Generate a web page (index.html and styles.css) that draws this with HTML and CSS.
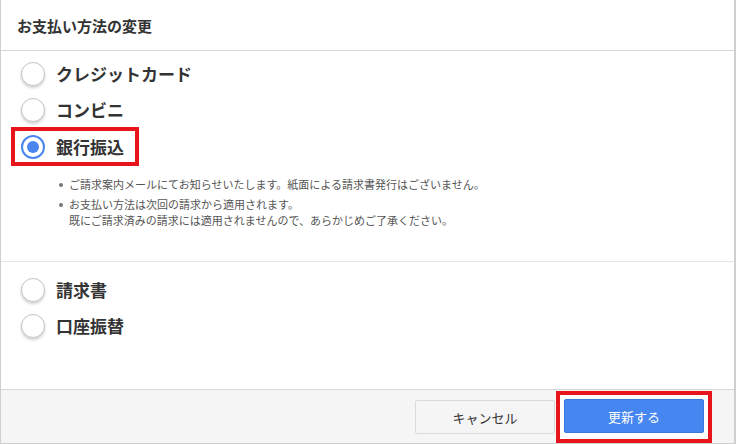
FILE: index.html
```html
<!DOCTYPE html>
<html lang="ja">
<head>
<meta charset="utf-8">
<link rel="stylesheet" href="styles.css">
</head>
<body>
<div class="dialog">
  <div class="header">お支払い方法の変更</div>
  <div class="content">
    <div class="group">
      <label class="option"><span class="radio"></span><span class="label">クレジットカード</span></label>
      <label class="option"><span class="radio"></span><span class="label">コンビニ</span></label>
      <label class="option selected"><span class="radio"><span class="dot"></span></span><span class="label">銀行振込</span></label>
      <ul class="notes">
        <li>ご請求案内メールにてお知らせいたします。紙面による請求書発行はございません。</li>
        <li>お支払い方法は次回の請求から適用されます。<br>既にご請求済みの請求には適用されませんので、あらかじめご了承ください。</li>
      </ul>
    </div>
    <div class="group second">
      <label class="option"><span class="radio"></span><span class="label">請求書</span></label>
      <label class="option"><span class="radio"></span><span class="label">口座振替</span></label>
    </div>
  </div>
  <div class="footer">
    <button class="btn cancel">キャンセル</button>
    <span class="highlight-btn"><button class="btn primary">更新する</button></span>
  </div>
</div>
</body>
</html>
```

FILE: styles.css
```css
* { box-sizing: border-box; }
html, body { margin: 0; padding: 0; background: #fff; }
body {
  font-family: "Noto Sans CJK JP", "Noto Sans", sans-serif;
  color: #333;
}
.dialog {
  width: 736px;
  height: 444px;
  border-left: 1px solid #cfcfcf;
  border-right: 2px solid #cfcfcf;
  border-bottom: 1px solid #cfcfcf;
  display: flex;
  flex-direction: column;
}
.header {
  height: 51px;
  padding: 16px 0 0 16px;
  font-size: 15px;
  font-weight: bold;
  line-height: 20px;
  color: #333;
  border-bottom: 1px solid #d6d6d6;
}
.content {
  flex: 1;
  display: flex;
  flex-direction: column;
}
.group {
  padding: 5px 0 0 10px;
  border-bottom: 1px solid #e6e6e6;
  height: 211px;
}
.group.second {
  border-bottom: none;
  height: auto;
  padding-top: 10px;
}
.option {
  display: flex;
  align-items: center;
  height: 37px;
  width: 128px;
  padding-left: 6px;
  gap: 11px;
  font-size: 17px;
  font-weight: bold;
  color: #333;
  border: 4px solid transparent;
  margin: -1px 0;
}
.option.selected {
  border-color: #e8141c;
  height: 39px;
  padding-left: 6px;
}
.radio {
  width: 24px;
  height: 24px;
  border-radius: 50%;
  border: 1px solid #c4c4c4;
  background: #fff;
  box-shadow: 0 2px 3px rgba(0,0,0,0.18);
  display: flex;
  align-items: center;
  justify-content: center;
  flex: none;
}
.selected .radio {
  border: 2px solid #4a86f0;
  box-shadow: none;
}
.dot {
  width: 12px;
  height: 12px;
  border-radius: 50%;
  background: #4a86f0;
}
.label {
  white-space: nowrap;
  line-height: 24px;
}
.notes {
  margin: 11px 0 0 0;
  padding: 0 0 0 58px;
  list-style: none;
  font-size: 11px;
  line-height: 16px;
  color: #555;
}
.notes li {
  position: relative;
  margin-bottom: 4px;
}
.notes li::before {
  content: "";
  position: absolute;
  left: -10px;
  top: 7px;
  width: 4px;
  height: 4px;
  border-radius: 50%;
  background: #777;
}
.footer {
  height: 54px;
  background: #f5f5f5;
  border-top: 1px solid #d6d6d6;
  display: flex;
  justify-content: flex-end;
  align-items: flex-start;
  padding: 1px 22px 0 0;
  gap: 0;
}
.btn {
  font-family: inherit;
  font-size: 13px;
  height: 34px;
  border-radius: 2px;
  cursor: pointer;
}
.cancel {
  margin-top: 9px;
  width: 140px;
  background: #f5f5f5;
  border: 1px solid #dadada;
  color: #333;
  margin-right: 1px;
}
.highlight-btn {
  border: 4px solid #e8141c;
  background: #fff;
  padding: 4px;
  height: 52px;
}
.primary {
  width: 140px;
  background: #4586f0;
  border: 1px solid #3a78e0;
  color: #fff;
}
```
